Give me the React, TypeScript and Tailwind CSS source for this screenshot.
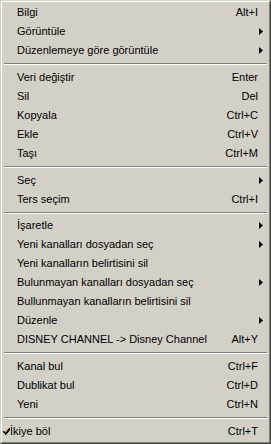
import React from "react";

type Item =
  | { type: "sep"; h?: number }
  | { type: "item"; label: string; shortcut?: string; sub?: boolean; checked?: boolean };

const items: Item[] = [
  { type: "item", label: "Bilgi", shortcut: "Alt+I" },
  { type: "item", label: "Görüntüle", sub: true },
  { type: "item", label: "Düzenlemeye göre görüntüle", sub: true },
  { type: "sep" },
  { type: "item", label: "Veri değiştir", shortcut: "Enter" },
  { type: "item", label: "Sil", shortcut: "Del" },
  { type: "item", label: "Kopyala", shortcut: "Ctrl+C" },
  { type: "item", label: "Ekle", shortcut: "Ctrl+V" },
  { type: "item", label: "Taşı", shortcut: "Ctrl+M" },
  { type: "sep" },
  { type: "item", label: "Seç", sub: true },
  { type: "item", label: "Ters seçim", shortcut: "Ctrl+I" },
  { type: "sep", h: 7 },
  { type: "item", label: "İşaretle", sub: true },
  { type: "item", label: "Yeni kanalları dosyadan seç", sub: true },
  { type: "item", label: "Yeni kanalların belirtisini sil" },
  { type: "item", label: "Bulunmayan kanalları dosyadan seç", sub: true },
  { type: "item", label: "Bullunmayan kanalların belirtisini sil" },
  { type: "item", label: "Düzenle", sub: true },
  { type: "item", label: "DISNEY CHANNEL -> Disney Channel", shortcut: "Alt+Y" },
  { type: "sep" },
  { type: "item", label: "Kanal bul", shortcut: "Ctrl+F" },
  { type: "item", label: "Dublikat bul", shortcut: "Ctrl+D" },
  { type: "item", label: "Yeni", shortcut: "Ctrl+N" },
  { type: "sep" },
  { type: "item", label: "İkiye böl", shortcut: "Ctrl+T", checked: true },
];

function Arrow() {
  return (
    <svg width="4" height="7" viewBox="0 0 4 7" className="block">
      <polygon points="0,0 4,3.5 0,7" fill="#000" />
    </svg>
  );
}

function Check() {
  return (
    <svg width="7" height="7" viewBox="0 0 7 7" className="block">
      <path d="M0 3 L0 4 L2 6 L2 7 L3 7 L7 2 L7 0 L6 0 L2.5 4.5 L1 3 Z" fill="#000" />
    </svg>
  );
}

export default function App() {
  return (
    <div className="w-[271px] h-[444px] bg-[#d4d0c8]">
      <div
        className="w-[271px] h-[444px] border-t border-l border-t-[#d4d0c8] border-l-[#d4d0c8] border-r border-b border-r-[#404040] border-b-[#404040] box-border"
      >
        <div className="h-full border-t border-l border-t-white border-l-white border-r border-b border-r-[#808080] border-b-[#808080] p-[1px] bg-[#d4d0c8] text-black text-[11px] leading-[13px]"
          style={{ fontFamily: '"Liberation Sans", Arial, sans-serif' }}
        >
          {items.map((it, i) =>
            it.type === "sep" ? (
              <div key={i} className={it.h === 7 ? "h-[7px] pt-[3px] px-[1px]" : "h-[8px] pt-[3px] px-[1px]"}>
                <div className="h-[1px] bg-[#808080]" />
                <div className="h-[1px] bg-white" />
              </div>
            ) : (
              <div key={i} className="h-[19px] flex items-center pr-[5px]">
                {it.checked ? (
                  <div className="flex items-center whitespace-nowrap pl-0">
                    <Check />
                    <span>{it.label}</span>
                  </div>
                ) : (
                  <span className="pl-[14px] whitespace-nowrap">{it.label}</span>
                )}
                <span className="flex-1" />
                {it.shortcut && <span className="whitespace-nowrap">{it.shortcut}</span>}
                <div className="w-[5px] flex justify-end">{it.sub && <Arrow />}</div>
              </div>
            )
          )}
        </div>
      </div>
    </div>
  );
}
